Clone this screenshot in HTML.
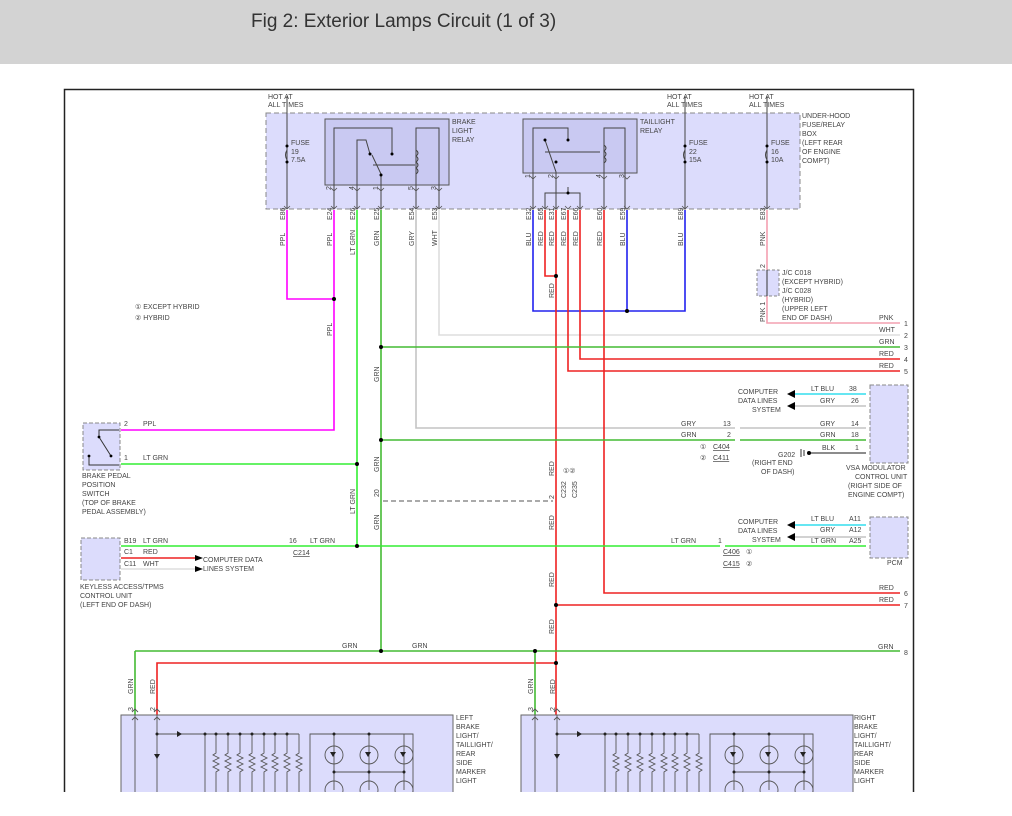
<!DOCTYPE html>
<html><head><meta charset="utf-8"><style>
html,body{margin:0;padding:0;background:#fff;width:1012px;height:816px;overflow:hidden}
.hdr{position:absolute;left:0;top:0;width:1012px;height:64px;background:#d3d3d3}
.hdr div{position:absolute;left:251px;top:11px;font:19px "Liberation Sans",sans-serif;color:#333}
svg{position:absolute;left:0;top:0}
text{font-family:"Liberation Sans",sans-serif;font-size:7px;fill:#444}
</style></head><body>
<div class="hdr"><div>Fig 2: Exterior Lamps Circuit (1 of 3)</div></div>
<svg width="1012" height="816" viewBox="0 0 1012 816">
<defs><clipPath id="c"><rect x="0" y="0" width="1012" height="792"/></clipPath></defs>
<g clip-path="url(#c)">
<rect x="64.5" y="89.5" width="849" height="760" fill="none" stroke="#222" stroke-width="1.5"/>
<!-- fuse box -->
<rect x="266" y="113" width="534" height="96" fill="#dcdcfc" stroke="#888" stroke-dasharray="5,3"/>
<rect x="325" y="119" width="124" height="66" fill="#c9c9f2" stroke="#555"/>
<rect x="523" y="119" width="114" height="54" fill="#c9c9f2" stroke="#555"/>
<g stroke="#444" fill="none" stroke-width="1">
<path d="M334 209V128H392V155M357 209V140H366L370 154M381 209V174L372 155M373 165H415M416 209V128H439V209M416 150q4 3 0 6q4 3 0 6q4 3 0 6q4 3 0 6"/>
<path d="M533 209V128H568V140M556 209V172L545 140M545 152H600M604 209V128H625V209M604 145q4 3 0 6q4 3 0 6q4 3 0 6M545 209V193H580V209M556 193V193M568 193V187"/>
<path d="M287 96V209M685 96V209M767 96V209"/>
</g>
<g stroke="#444" stroke-width="1" fill="none">
<path d="M287 150q-3 5 0 10M685 150q-3 5 0 10M767 150q-3 5 0 10"/>
</g>
<g fill="#000"><circle cx="287" cy="146" r="1.5"/><circle cx="287" cy="162" r="1.5"/><circle cx="685" cy="146" r="1.5"/><circle cx="685" cy="162" r="1.5"/><circle cx="767" cy="146" r="1.5"/><circle cx="767" cy="162" r="1.5"/>
<circle cx="392" cy="154" r="1.5"/><circle cx="370" cy="154" r="1.5"/><circle cx="381" cy="175" r="1.5"/><circle cx="568" cy="140" r="1.5"/><circle cx="545" cy="140" r="1.5"/><circle cx="556" cy="162" r="1.5"/><circle cx="568" cy="193" r="1.5"/></g>
<g stroke="#555" fill="none" stroke-width="0.8">
<path d="M284 206l3 3l3-3M331 206l3 3l3-3M354 206l3 3l3-3M378 206l3 3l3-3M413 206l3 3l3-3M436 206l3 3l3-3M530 206l3 3l3-3M542 206l3 3l3-3M553 206l3 3l3-3M565 206l3 3l3-3M577 206l3 3l3-3M601 206l3 3l3-3M624 206l3 3l3-3M682 206l3 3l3-3M764 206l3 3l3-3"/>
<path d="M331 188l3 3l3-3M354 188l3 3l3-3M378 188l3 3l3-3M413 188l3 3l3-3M436 188l3 3l3-3M530 176l3 3l3-3M553 176l3 3l3-3M601 176l3 3l3-3M624 176l3 3l3-3"/>
</g>
<text x="268" y="99">HOT AT</text><text x="268" y="107">ALL TIMES</text>
<text x="667" y="99">HOT AT</text><text x="667" y="107">ALL TIMES</text>
<text x="749" y="99">HOT AT</text><text x="749" y="107">ALL TIMES</text>
<text x="291" y="145">FUSE</text><text x="291" y="154">19</text><text x="291" y="162">7.5A</text>
<text x="689" y="145">FUSE</text><text x="689" y="154">22</text><text x="689" y="162">15A</text>
<text x="771" y="145">FUSE</text><text x="771" y="154">16</text><text x="771" y="162">10A</text>
<text x="452" y="124">BRAKE</text><text x="452" y="133">LIGHT</text><text x="452" y="142">RELAY</text>
<text x="640" y="124">TAILLIGHT</text><text x="640" y="133">RELAY</text>
<text x="802" y="118">UNDER-HOOD</text><text x="802" y="127">FUSE/RELAY</text><text x="802" y="136">BOX</text><text x="802" y="145">(LEFT REAR</text><text x="802" y="154">OF ENGINE</text><text x="802" y="163">COMPT)</text>
<!-- pin numbers rotated -->
<g>
<text transform="translate(331,190) rotate(-90)">2</text><text transform="translate(354,190) rotate(-90)">4</text><text transform="translate(378,190) rotate(-90)">1</text><text transform="translate(413,190) rotate(-90)">5</text><text transform="translate(436,190) rotate(-90)">3</text>
<text transform="translate(530,178) rotate(-90)">1</text><text transform="translate(553,178) rotate(-90)">2</text><text transform="translate(601,178) rotate(-90)">4</text><text transform="translate(624,178) rotate(-90)">3</text>
</g>
<!-- wires -->
<g fill="none" stroke-width="1.6">
<path d="M287 210V299H334" stroke="#f0f"/>
<path d="M334 210V430H121" stroke="#f0f"/>
<path d="M357 210V546M121 464H357" stroke="#3e3"/>
<path d="M381 210V651" stroke="#4b3"/>
<path d="M416 210V428H735M740 428H866" stroke="#c4c4c4"/>
<path d="M439 210V335H900" stroke="#ddd"/>
<path d="M533 210V311H685V210M627 210V311" stroke="#22e"/>
<path d="M545 210V276H556M556 210V716M568 210V371H900M580 210V359H900M604 210V593H900M556 605H900M556 663H157V716" stroke="#e22"/>
<path d="M767 210V323H900" stroke="#f4a0b0"/>
<path d="M381 347H900M381 440H735M740 440H866M135 651H900M135 651V716M535 651V716" stroke="#4b3"/>
<path d="M121 546H720M725 546H866" stroke="#3e3"/>
<path d="M121 558H195" stroke="#e22"/><path d="M121 569H195" stroke="#ddd"/>
<path d="M795 394H866M795 525H866" stroke="#3de"/>
<path d="M795 406H866M795 537H866" stroke="#c4c4c4"/>
<path d="M808 453H866" stroke="#666"/>
</g>
<path d="M383 501H553" stroke="#555" stroke-dasharray="5,3" fill="none"/>
<g fill="#000">
<circle cx="334" cy="299" r="2"/><circle cx="556" cy="276" r="2"/><circle cx="627" cy="311" r="2"/><circle cx="381" cy="347" r="2"/><circle cx="381" cy="440" r="2"/><circle cx="357" cy="464" r="2"/><circle cx="357" cy="546" r="2"/><circle cx="556" cy="605" r="2"/><circle cx="381" cy="651" r="2"/><circle cx="535" cy="651" r="2"/><circle cx="556" cy="663" r="2"/>
<path d="M195 555l8 3l-8 3zM195 566l8 3l-8 3zM795 390l-8 4l8 4zM795 402l-8 4l8 4zM795 521l-8 4l8 4zM795 533l-8 4l8 4z"/>
</g>
<!-- wire labels -->
<g>
<text transform="translate(285,220) rotate(-90)">E86</text><text transform="translate(332,220) rotate(-90)">E24</text><text transform="translate(355,220) rotate(-90)">E26</text><text transform="translate(379,220) rotate(-90)">E25</text><text transform="translate(414,220) rotate(-90)">E54</text><text transform="translate(437,220) rotate(-90)">E53</text>
<text transform="translate(531,220) rotate(-90)">E32</text><text transform="translate(543,220) rotate(-90)">E65</text><text transform="translate(554,220) rotate(-90)">E31</text><text transform="translate(566,220) rotate(-90)">E67</text><text transform="translate(578,220) rotate(-90)">E66</text><text transform="translate(602,220) rotate(-90)">E60</text><text transform="translate(625,220) rotate(-90)">E59</text><text transform="translate(683,220) rotate(-90)">E89</text><text transform="translate(765,220) rotate(-90)">E83</text>
<text transform="translate(285,246) rotate(-90)">PPL</text><text transform="translate(332,246) rotate(-90)">PPL</text><text transform="translate(355,255) rotate(-90)">LT GRN</text><text transform="translate(379,246) rotate(-90)">GRN</text><text transform="translate(414,246) rotate(-90)">GRY</text><text transform="translate(437,246) rotate(-90)">WHT</text>
<text transform="translate(531,246) rotate(-90)">BLU</text><text transform="translate(543,246) rotate(-90)">RED</text><text transform="translate(554,246) rotate(-90)">RED</text><text transform="translate(566,246) rotate(-90)">RED</text><text transform="translate(578,246) rotate(-90)">RED</text><text transform="translate(602,246) rotate(-90)">RED</text><text transform="translate(625,246) rotate(-90)">BLU</text><text transform="translate(683,246) rotate(-90)">BLU</text><text transform="translate(765,246) rotate(-90)">PNK</text>
<text transform="translate(554,298) rotate(-90)">RED</text><text transform="translate(332,336) rotate(-90)">PPL</text><text transform="translate(379,382) rotate(-90)">GRN</text>
<text transform="translate(379,472) rotate(-90)">GRN</text><text transform="translate(355,514) rotate(-90)">LT GRN</text><text transform="translate(379,530) rotate(-90)">GRN</text><text transform="translate(379,497) rotate(-90)">20</text>
<text transform="translate(554,476) rotate(-90)">RED</text><text transform="translate(554,530) rotate(-90)">RED</text><text transform="translate(554,587) rotate(-90)">RED</text><text transform="translate(554,634) rotate(-90)">RED</text><text transform="translate(554,499) rotate(-90)">2</text>
<text transform="translate(566,498) rotate(-90)">C232</text><text transform="translate(577,498) rotate(-90)">C235</text>
<text transform="translate(133,694) rotate(-90)">GRN</text><text transform="translate(155,694) rotate(-90)">RED</text><text transform="translate(133,711) rotate(-90)">3</text><text transform="translate(155,711) rotate(-90)">2</text>
<text transform="translate(533,694) rotate(-90)">GRN</text><text transform="translate(555,694) rotate(-90)">RED</text><text transform="translate(533,711) rotate(-90)">3</text><text transform="translate(555,711) rotate(-90)">2</text>
<text transform="translate(765,268) rotate(-90)">2</text><text transform="translate(765,322) rotate(-90)">PNK 1</text>
</g>
<rect x="757" y="270" width="22" height="26" fill="#dcdcfc" stroke="#888" stroke-dasharray="3,2"/>
<path d="M767 270V296" stroke="#333"/>
<text x="782" y="275">J/C C018</text><text x="782" y="284">(EXCEPT HYBRID)</text><text x="782" y="293">J/C C028</text><text x="782" y="302">(HYBRID)</text><text x="782" y="311">(UPPER LEFT</text><text x="782" y="320">END OF DASH)</text>
<text x="879" y="320">PNK</text><text x="879" y="332">WHT</text><text x="879" y="344">GRN</text><text x="879" y="356">RED</text><text x="879" y="368">RED</text>
<text x="904" y="326">1</text><text x="904" y="338">2</text><text x="904" y="350">3</text><text x="904" y="362">4</text><text x="904" y="374">5</text>
<text x="879" y="590">RED</text><text x="879" y="602">RED</text><text x="904" y="596">6</text><text x="904" y="608">7</text>
<text x="878" y="649">GRN</text><text x="904" y="655">8</text><text x="342" y="648">GRN</text><text x="412" y="648">GRN</text>
<text x="135" y="309">① EXCEPT HYBRID</text><text x="135" y="320">② HYBRID</text>
<!-- brake pedal switch -->
<rect x="83" y="423" width="37" height="47" fill="#dcdcfc" stroke="#888" stroke-dasharray="4,2"/>
<path d="M119 430H99V437L111 456M89 456V465H119" stroke="#333" fill="none"/>
<circle cx="99" cy="437" r="1.4"/><circle cx="111" cy="456" r="1.4"/><circle cx="89" cy="456" r="1.4"/>
<text x="124" y="426">2</text><text x="143" y="426">PPL</text><text x="124" y="460">1</text><text x="143" y="460">LT GRN</text>
<text x="82" y="478">BRAKE PEDAL</text><text x="82" y="487">POSITION</text><text x="82" y="496">SWITCH</text><text x="82" y="505">(TOP OF BRAKE</text><text x="82" y="514">PEDAL ASSEMBLY)</text>
<!-- keyless -->
<rect x="81" y="538" width="39" height="42" fill="#dcdcfc" stroke="#888" stroke-dasharray="4,2"/>
<text x="124" y="543">B19</text><text x="143" y="543">LT GRN</text><text x="124" y="554">C1</text><text x="143" y="554">RED</text><text x="124" y="566">C11</text><text x="143" y="566">WHT</text>
<text x="203" y="562">COMPUTER DATA</text><text x="203" y="571">LINES SYSTEM</text>
<text x="80" y="589">KEYLESS ACCESS/TPMS</text><text x="80" y="598">CONTROL UNIT</text><text x="80" y="607">(LEFT END OF DASH)</text>
<text x="289" y="543">16</text><text x="310" y="543">LT GRN</text><text x="293" y="555" text-decoration="underline">C214</text>
<text x="671" y="543">LT GRN</text><text x="718" y="543">1</text><text x="723" y="554" text-decoration="underline">C406</text><text x="746" y="554">①</text><text x="723" y="566" text-decoration="underline">C415</text><text x="746" y="566">②</text>
<text x="563" y="473">①②</text>
<!-- VSA -->
<rect x="870" y="385" width="38" height="78" fill="#dcdcfc" stroke="#888" stroke-dasharray="4,2"/>
<text x="811" y="391">LT BLU</text><text x="849" y="391">38</text><text x="820" y="403">GRY</text><text x="851" y="403">26</text>
<text x="738" y="394">COMPUTER</text><text x="738" y="403">DATA LINES</text><text x="752" y="412">SYSTEM</text>
<text x="681" y="426">GRY</text><text x="723" y="426">13</text><text x="681" y="437">GRN</text><text x="727" y="437">2</text>
<text x="820" y="426">GRY</text><text x="851" y="426">14</text><text x="820" y="437">GRN</text><text x="851" y="437">18</text><text x="822" y="450">BLK</text><text x="855" y="450">1</text>
<text x="700" y="449">①</text><text x="713" y="449" text-decoration="underline">C404</text><text x="700" y="460">②</text><text x="713" y="460" text-decoration="underline">C411</text>
<text x="778" y="457">G202</text><path d="M801 449v8M804 450v6" stroke="#333"/><circle cx="809" cy="453" r="2"/>
<text x="752" y="465">(RIGHT END</text><text x="761" y="474">OF DASH)</text>
<text x="846" y="470">VSA MODULATOR</text><text x="855" y="479">CONTROL UNIT</text><text x="848" y="488">(RIGHT SIDE OF</text><text x="848" y="497">ENGINE COMPT)</text>
<!-- PCM -->
<rect x="870" y="517" width="38" height="41" fill="#dcdcfc" stroke="#888" stroke-dasharray="4,2"/>
<text x="738" y="524">COMPUTER</text><text x="738" y="533">DATA LINES</text><text x="752" y="542">SYSTEM</text>
<text x="811" y="521">LT BLU</text><text x="849" y="521">A11</text><text x="820" y="532">GRY</text><text x="849" y="532">A12</text><text x="811" y="543">LT GRN</text><text x="849" y="543">A25</text>
<text x="887" y="565">PCM</text>
<!-- lamps -->
<g id="lamp">
<rect x="121" y="715" width="332" height="90" fill="#dcdcfc" stroke="#666"/>
<g stroke="#555" fill="none" stroke-width="0.9">
<path d="M135 715V800M157 715V800M157 734H299M205 734V800M310 800V734H413V800M334 734V790M369 734V790M404 734V790M334 772H404"/>
<path d="M216 734V753l-3 2l6 3l-6 3l6 3l-6 3l6 3l-3 2V792M228 734V753l-3 2l6 3l-6 3l6 3l-6 3l6 3l-3 2V792M240 734V753l-3 2l6 3l-6 3l6 3l-6 3l6 3l-3 2V792M252 734V753l-3 2l6 3l-6 3l6 3l-6 3l6 3l-3 2V792M264 734V753l-3 2l6 3l-6 3l6 3l-6 3l6 3l-3 2V792M275 734V753l-3 2l6 3l-6 3l6 3l-6 3l6 3l-3 2V792M287 734V753l-3 2l6 3l-6 3l6 3l-6 3l6 3l-3 2V792M299 734V753l-3 2l6 3l-6 3l6 3l-6 3l6 3l-3 2V792"/>
<circle cx="334" cy="755" r="9"/><circle cx="369" cy="755" r="9"/><circle cx="404" cy="755" r="9"/><circle cx="334" cy="790" r="9"/><circle cx="369" cy="790" r="9"/><circle cx="404" cy="790" r="9"/>
<path d="M132 712l3 -3l3 3M154 712l3-3l3 3M132 720l3-3l3 3M154 720l3-3l3 3"/>
</g>
<g fill="#222"><path d="M177 731l5 3l-5 3zM154 754l3 5l3-5zM330 752l3 5l3-5zM365 752l3 5l3-5zM400 752l3 5l3-5z"/>
<circle cx="157" cy="734" r="1.5"/><circle cx="205" cy="734" r="1.5"/><circle cx="216" cy="734" r="1.5"/><circle cx="228" cy="734" r="1.5"/><circle cx="240" cy="734" r="1.5"/><circle cx="252" cy="734" r="1.5"/><circle cx="264" cy="734" r="1.5"/><circle cx="275" cy="734" r="1.5"/><circle cx="287" cy="734" r="1.5"/><circle cx="334" cy="734" r="1.5"/><circle cx="369" cy="734" r="1.5"/><circle cx="334" cy="772" r="1.5"/><circle cx="369" cy="772" r="1.5"/><circle cx="404" cy="772" r="1.5"/></g>
</g>
<use href="#lamp" x="400"/>
<text x="456" y="720">LEFT</text><text x="456" y="729">BRAKE</text><text x="456" y="738">LIGHT/</text><text x="456" y="747">TAILLIGHT/</text><text x="456" y="756">REAR</text><text x="456" y="765">SIDE</text><text x="456" y="774">MARKER</text><text x="456" y="783">LIGHT</text>
<text x="854" y="720">RIGHT</text><text x="854" y="729">BRAKE</text><text x="854" y="738">LIGHT/</text><text x="854" y="747">TAILLIGHT/</text><text x="854" y="756">REAR</text><text x="854" y="765">SIDE</text><text x="854" y="774">MARKER</text><text x="854" y="783">LIGHT</text>
</g>
</svg>
</body></html>
